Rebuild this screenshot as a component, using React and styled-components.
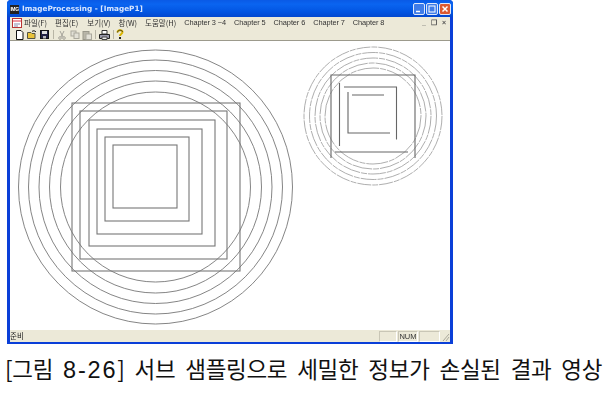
import React from "react";
import styled, { createGlobalStyle } from "styled-components";

const Global = createGlobalStyle`
  html, body { margin: 0; padding: 0; background: #fff; }
  body { width: 607px; height: 400px; overflow: hidden; font-family: "Noto Sans CJK KR", "Liberation Sans", sans-serif; }
`;
const Page = styled.div`
  display: flex;
  flex-direction: column;
  width: 607px;
  height: 400px;
`;
const Window = styled.div`
  display: flex;
  flex-direction: column;
  width: 446px;
  height: 344px;
  margin-left: 7px;
  box-sizing: border-box;
  padding: 0 3px 2px 3px;
  background: #0a3fd8;
  border-radius: 4px 4px 0 0;
  filter: blur(0.3px);
`;
const TitleBar = styled.div`
  display: flex;
  align-items: center;
  height: 17px;
  flex: none;
  margin: 0 -3px;
  padding: 1px 2px 0 3px;
  box-sizing: border-box;
  gap: 3px;
  background: linear-gradient(180deg, #0a5ae6 0%, #0a64f0 25%, #0255e2 70%, #0348cf 100%);
  border-radius: 4px 4px 0 0;
`;
const AppIcon = styled.div`
  flex: none;
  width: 9px;
  height: 9px;
  background: #222;
  color: #fff;
  font: bold 5px/9px "Liberation Sans", sans-serif;
  letter-spacing: -0.4px;
  text-align: center;
  white-space: nowrap;
`;
const TitleText = styled.div`
  flex: 1;
  color: #d8e6ff;
  font: bold 7.3px/1 "DejaVu Sans", sans-serif;
  white-space: nowrap;
`;
const Caps = styled.div`
  display: flex;
  gap: 1px;
`;
const CapButton = styled.div`
  display: flex;
  width: 12px;
  height: 12px;
  box-sizing: border-box;
  border: 1px solid #dfe8fa;
  border-radius: 2px;
  background: ${(p) => (p.$close ? "#dc5a30" : "#3f7ce8")};
`;
const CapGlyph = styled.svg`
  display: block;
  width: 10px;
  height: 10px;
`;
const MenuBar = styled.div`
  display: flex;
  align-items: center;
  height: 11px;
  flex: none;
  background: #ece9d8;
  font-size: 7.5px;
  color: #333;
`;
const MenuLogo = styled.div`
  display: flex;
  width: 14px;
  justify-content: center;
  flex: none;
`;
const MenuItem = styled.span`
  margin-left: ${(p) => p.$gap}px;
  white-space: nowrap;
  font-family: ${(p) => (p.$latin ? '"Liberation Sans", sans-serif' : "inherit")};
  font-size: ${(p) => (p.$latin ? "7.4px" : "7.5px")};
  letter-spacing: ${(p) => (p.$latin ? "-0.1px" : "0")};
  line-height: 11px;
`;
const MdiButtons = styled.div`
  display: flex;
  margin-left: auto;
  gap: 5px;
  padding-right: 4px;
  color: #555;
  font: bold 7px/11px "Liberation Sans", sans-serif;
`;
const ToolBar = styled.div`
  display: flex;
  align-items: center;
  flex: none;
  height: 13px;
  padding: 1px 0 0 3.25px;
  box-sizing: border-box;
  background: #ece9d8;
  border-bottom: 1px solid #9c9a8c;
`;
const Tool = styled.div`
  display: flex;
  align-items: center;
  justify-content: center;
  width: ${(p) => (p.$narrow ? 8 : 12.5)}px;
  height: 11px;
  flex: none;
`;
const ToolSep = styled.div`
  flex: none;
  width: 1px;
  height: 9px;
  margin: 0 2px;
  background: #b8b5a5;
`;
const Client = styled.div`
  flex: 1;
  min-height: 0;
  background: #fff;
  display: flex;
`;
const Canvas = styled.svg`
  display: block;
  width: 440px;
  height: 289px;
`;
const StatusBar = styled.div`
  display: flex;
  align-items: center;
  flex: none;
  height: 12px;
  background: #ece9d8;
  font-size: 7.5px;
  color: #222;
`;
const StatusText = styled.span`
  flex: 1;
  line-height: 12px;
`;
const Pane = styled.div`
  width: ${(p) => p.$w}px;
  height: 11px;
  box-sizing: border-box;
  margin-right: 1px;
  border: 1px solid;
  border-color: #c9c6b6 #fff #fff #c9c6b6;
  font: 7.5px/9px "Liberation Sans", sans-serif;
  text-align: center;
  color: #333;
`;
const Grip = styled.svg`
  flex: none;
  width: 9px;
  height: 12px;
`;
const Caption = styled.div`
  margin: 9px 0 0 5px;
  font-size: 22.5px;
  line-height: 30px;
  color: #111;
  letter-spacing: -0.3px;
  word-spacing: 5.2px;
  white-space: nowrap;
`;
const FigureNumber = styled.span`
  font-family: "Liberation Sans", sans-serif;
  font-size: 23.5px;
  letter-spacing: 1.8px;
`;

const squares = [
  [72, 103, 168, 168], [80, 111, 147, 148], [89, 120, 126, 126],
  [97, 129, 105, 105], [105, 137, 84, 84], [113, 145, 64, 63],
];
const radii = [137, 127, 116.5, 106, 95];
const smallRadii = [69, 63.5, 58, 53, 48];

const Drawing = () => (
  <Canvas viewBox="10 41 440 289">
    <g fill="none">
      {radii.map((r) => <circle key={r} cx="155.5" cy="187" r={r} stroke="#777" strokeWidth="0.9" />)}
      {squares.map(([x, y, w, h]) => <rect key={x} x={x} y={y} width={w} height={h} stroke="#777" strokeWidth="1.1" />)}
      {smallRadii.map((r, i) => (
        <circle key={r} cx="373" cy="116" r={r} stroke="#999" strokeWidth="0.8" strokeDasharray={`${14 + i * 2} 1 6 1`} />
      ))}
      <path d="M331 158V75H415V158M335 152H408M339.5 83V146M344 87H396.5V139.5M348 92V133H390M352 95H384" stroke="#666" strokeWidth="1.1" />
    </g>
  </Canvas>
);

const NewIcon = () => <svg width="9" height="10" viewBox="0 0 9 10"><path d="M1.5.5H6L8 2.5V9.5H1.5Z" fill="#fff" stroke="#111" /></svg>;
const OpenIcon = () => <svg width="10" height="9" viewBox="0 0 10 9"><path d="M.5 2.5H4L5 3.5H8V8.5H.5Z" fill="#e8c23a" stroke="#554" /><path d="M5 1.5C6 .5 8 .5 9 2" fill="none" stroke="#111" /></svg>;
const SaveIcon = () => <svg width="9" height="9" viewBox="0 0 9 9"><rect x=".5" y=".5" width="8" height="8" fill="#224" stroke="#111" /><rect x="2" y="1" width="5" height="3" fill="#ddd" /><rect x="3" y="6" width="3" height="2.5" fill="#bbb" /></svg>;
const CutIcon = () => <svg width="8" height="10" viewBox="0 0 8 10"><path d="M2 1L5 7M6 1L3 7" stroke="#a5a39a" fill="none" /><circle cx="2" cy="8" r="1.3" stroke="#a5a39a" fill="none" /><circle cx="6" cy="8" r="1.3" stroke="#a5a39a" fill="none" /></svg>;
const CopyIcon = () => <svg width="10" height="9" viewBox="0 0 10 9"><rect x="1" y="1" width="5" height="5" fill="#e2e0d6" stroke="#aaa89c" /><rect x="4" y="3" width="5" height="5.5" fill="#e2e0d6" stroke="#aaa89c" /></svg>;
const PasteIcon = () => <svg width="10" height="10" viewBox="0 0 10 10"><rect x="1" y="1.5" width="6" height="8" fill="#b9b6a8" stroke="#99978a" /><rect x="4" y="4" width="5.5" height="5.5" fill="#e2e0d6" stroke="#aaa89c" /></svg>;
const PrintIcon = () => <svg width="11" height="10" viewBox="0 0 11 10"><path d="M3 .5H8V4H3Z" fill="#fff" stroke="#333" /><path d="M.5 4.5H10.5V8.5H.5Z" fill="#99a" stroke="#222" /><path d="M3 7H8V9.5H3Z" fill="#eee" stroke="#444" /></svg>;
const HelpIcon = () => <svg width="8" height="11" viewBox="0 0 8 11"><path d="M1.5 3.5C1.5 .5 6.5 .5 6.5 3C6.5 5 4 5 4 7" fill="none" stroke="#d8b400" strokeWidth="2" /><path d="M1.5 3.5C1.5 .5 6.5 .5 6.5 3" fill="none" stroke="#222" strokeWidth=".7" /><rect x="3" y="8" width="2" height="2" fill="#222" /></svg>;
const DocLogo = () => <svg width="10" height="10" viewBox="0 0 10 10"><rect x=".5" y=".5" width="9" height="9" fill="#fff" stroke="#b33" /><path d="M1 3H9" stroke="#d34" /><path d="M2 6H8M2 8H6" stroke="#88a" /></svg>;

const menus = [["파일(F)", 0], ["편집(E)", 8], ["보기(V)", 9], ["창(W)", 8], ["도움말(H)", 8]];
const chapters = [["Chapter 3 ~4", 8], ["Chapter 5", 8], ["Chapter 6", 8], ["Chapter 7", 8], ["Chapter 8", 8]];

export default function App() {
  return (
    <Page>
      <Global />
      <Window>
        <TitleBar>
          <AppIcon>IMG</AppIcon>
          <TitleText>ImageProcessing - [ImageP1]</TitleText>
          <Caps>
            <CapButton><CapGlyph viewBox="0 0 10 10"><path d="M2 7.5H6" stroke="#fff" strokeWidth="1.5" /></CapGlyph></CapButton>
            <CapButton><CapGlyph viewBox="0 0 10 10"><rect x="2" y="2" width="6" height="6" fill="none" stroke="#fff" /></CapGlyph></CapButton>
            <CapButton $close><CapGlyph viewBox="0 0 10 10"><path d="M2.5 2.5L7.5 7.5M7.5 2.5L2.5 7.5" stroke="#fff" strokeWidth="1.5" /></CapGlyph></CapButton>
          </Caps>
        </TitleBar>
        <MenuBar>
          <MenuLogo><DocLogo /></MenuLogo>
          {menus.map(([m, g]) => <MenuItem key={m} $gap={g}>{m}</MenuItem>)}
          {chapters.map(([c, g]) => <MenuItem key={c} $latin $gap={g}>{c}</MenuItem>)}
          <MdiButtons><span>_</span><span>❐</span><span>×</span></MdiButtons>
        </MenuBar>
        <ToolBar>
          <Tool><NewIcon /></Tool>
          <Tool><OpenIcon /></Tool>
          <Tool><SaveIcon /></Tool>
          <ToolSep />
          <Tool><CutIcon /></Tool>
          <Tool><CopyIcon /></Tool>
          <Tool><PasteIcon /></Tool>
          <ToolSep />
          <Tool><PrintIcon /></Tool>
          <ToolSep />
          <Tool $narrow><HelpIcon /></Tool>
        </ToolBar>
        <Client><Drawing /></Client>
        <StatusBar>
          <StatusText>준비</StatusText>
          <Pane $w={18} />
          <Pane $w={20}>NUM</Pane>
          <Pane $w={21} />
          <Grip viewBox="0 0 9 12"><path d="M8 4L2 11M8 7L5 11" stroke="#aaa89a" /></Grip>
        </StatusBar>
      </Window>
      <Caption>[그림 <FigureNumber>8-26</FigureNumber>] 서브 샘플링으로 세밀한 정보가 손실된 결과 영상</Caption>
    </Page>
  );
}
